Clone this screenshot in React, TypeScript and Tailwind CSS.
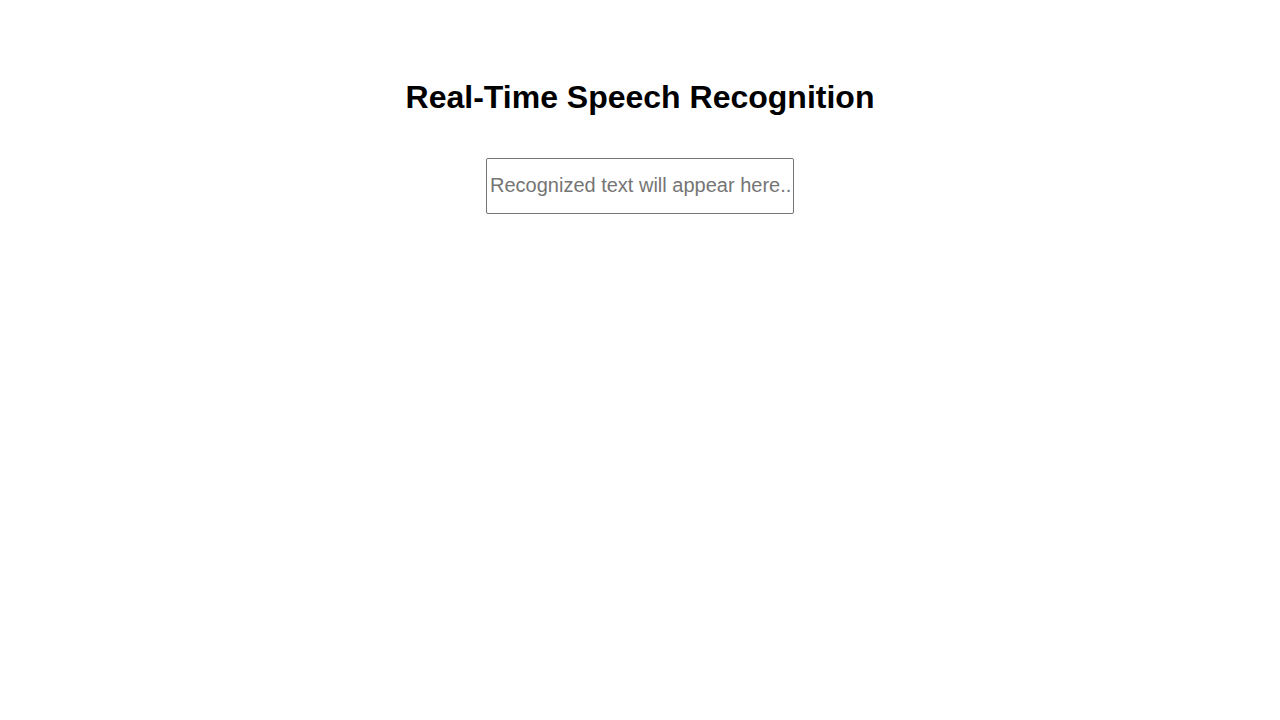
import React from "react";

export default function App() {
  return (
    <div className="min-h-[720px] bg-white flex flex-col items-center pt-[79px] font-['Liberation_Sans',Arial,sans-serif]">
      <h1 className="text-[32px] font-bold leading-[37px] text-black">Real-Time Speech Recognition</h1>
      <input
        type="text"
        className="mt-[42px] w-[308px] h-[56px] border border-[#767676] rounded-[2px] pl-[3px] pr-[2px] pt-0 pb-[2px] text-[20px] text-black placeholder:text-[#757575] outline-none font-['Liberation_Sans',Arial,sans-serif]"
        placeholder="Recognized text will appear here..."
      />
    </div>
  );
}
